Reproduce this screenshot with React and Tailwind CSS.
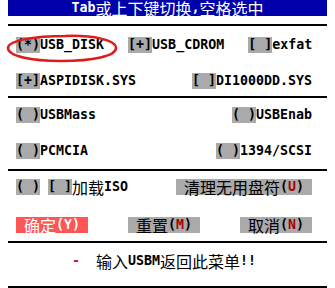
const mono = "font-['DejaVu_Sans_Mono',monospace] font-bold text-[13.3px]";
const han = "inline-block h-4 align-top font-['Noto_Sans_CJK_SC',sans-serif] font-normal text-[16px] leading-4";

// split a label into latin / CJK runs so each gets its own font
function Txt({ s, className = '' }) {
  const parts = s.match(/[\u3000-\u9fff\uff00-\uffef]+|[^\u3000-\u9fff\uff00-\uffef]+/g) || [];
  return parts.map((p, i) =>
    /[\u3000-\u9fff\uff00-\uffef]/.test(p) ? (
      <span key={i} className={`${han} ${className}`}>{p}</span>
    ) : (
      <span key={i} className={`${mono} ${className} whitespace-pre`}>{p}</span>
    )
  );
}

function Opt({ mark, label }) {
  return (
    <div className={`${mono} h-4 whitespace-nowrap leading-4`}>
      <span className="inline-block h-4 whitespace-pre bg-[#aaaaaa]">{mark}</span>
      <Txt s={label} />
    </div>
  );
}

function Btn({ label, hot, red }) {
  return (
    <div className={`${mono} h-4 whitespace-nowrap px-2 leading-4 ${red ? 'bg-[#ff5555] text-white' : 'bg-[#aaaaaa] text-black'}`}>
      <Txt s={label} />
      <span>(</span>
      <span className={red ? '' : 'text-[#aa0000]'}>{hot}</span>
      <span>)</span>
    </div>
  );
}

const Rule = ({ mt }) => <div className={`h-[2px] bg-black ${mt}`} />;

export default function App() {
  return (
    <div className="relative h-[288px] w-[335px] bg-white text-black">
      <div className="mx-2">
        <div className={`${mono} h-4 bg-[#0000aa] text-center leading-4 text-white`}>
          <Txt s="Tab或上下键切换,空格选中" />
        </div>

        <Rule mt="mt-2" />

        <div className="mt-[11px] flex gap-6 pl-2">
          <Opt mark="(*)" label="USB_DISK" />
          <Opt mark="[+]" label="USB_CDROM" />
          <Opt mark="[ ]" label="exfat" />
        </div>

        <div className="mt-5 flex justify-between pl-2 pr-[15px]">
          <Opt mark="[+]" label="ASPIDISK.SYS" />
          <Opt mark="[ ]" label="DI1000DD.SYS" />
        </div>

        <Rule mt="mt-[7px]" />

        <div className="mt-[9px] flex justify-between pl-2 pr-[15px]">
          <Opt mark="( )" label="USBMass" />
          <Opt mark="( )" label="USBEnab" />
        </div>

        <div className="mt-5 flex justify-between pl-2 pr-[15px]">
          <Opt mark="( )" label="PCMCIA" />
          <Opt mark="( )" label="1394/SCSI" />
        </div>

        <Rule mt="mt-[10px]" />

        <div className="mt-2 flex justify-between pl-2 pr-[15px]">
          <div className="flex gap-2">
            <Opt mark="( )" label="" />
            <Opt mark="[ ]" label="加载ISO" />
          </div>
          <Btn label="清理无用盘符" hot="U" />
        </div>

        <div className="mt-[22px] flex justify-between pl-2 pr-[15px]">
          <Btn label="确定" hot="Y" red />
          <Btn label="重置" hot="M" />
          <Btn label="取消" hot="N" />
        </div>

        <Rule mt="mt-2" />

        <div className={`${mono} mt-[10px] h-4 whitespace-pre pl-16 leading-4`}>
          <span className="text-[#cc2222]">-</span>
          <span>  </span>
          <Txt s="输入USBM返回此菜单!!" />
        </div>

        <Rule mt="mt-[17px]" />
      </div>

      {/* red hand-drawn ring around the selected item */}
      <svg className="absolute left-[5px] top-[33px]" width="114" height="30" viewBox="0 0 114 30">
        <path
          d="M60 3 C88 2 111 7 111 15 C111 23 88 28 56 28 C26 28 3 23 3 15 C3 8 26 3 62 3"
          fill="none"
          stroke="#e01b1b"
          strokeWidth="2.5"
        />
      </svg>
    </div>
  );
}
